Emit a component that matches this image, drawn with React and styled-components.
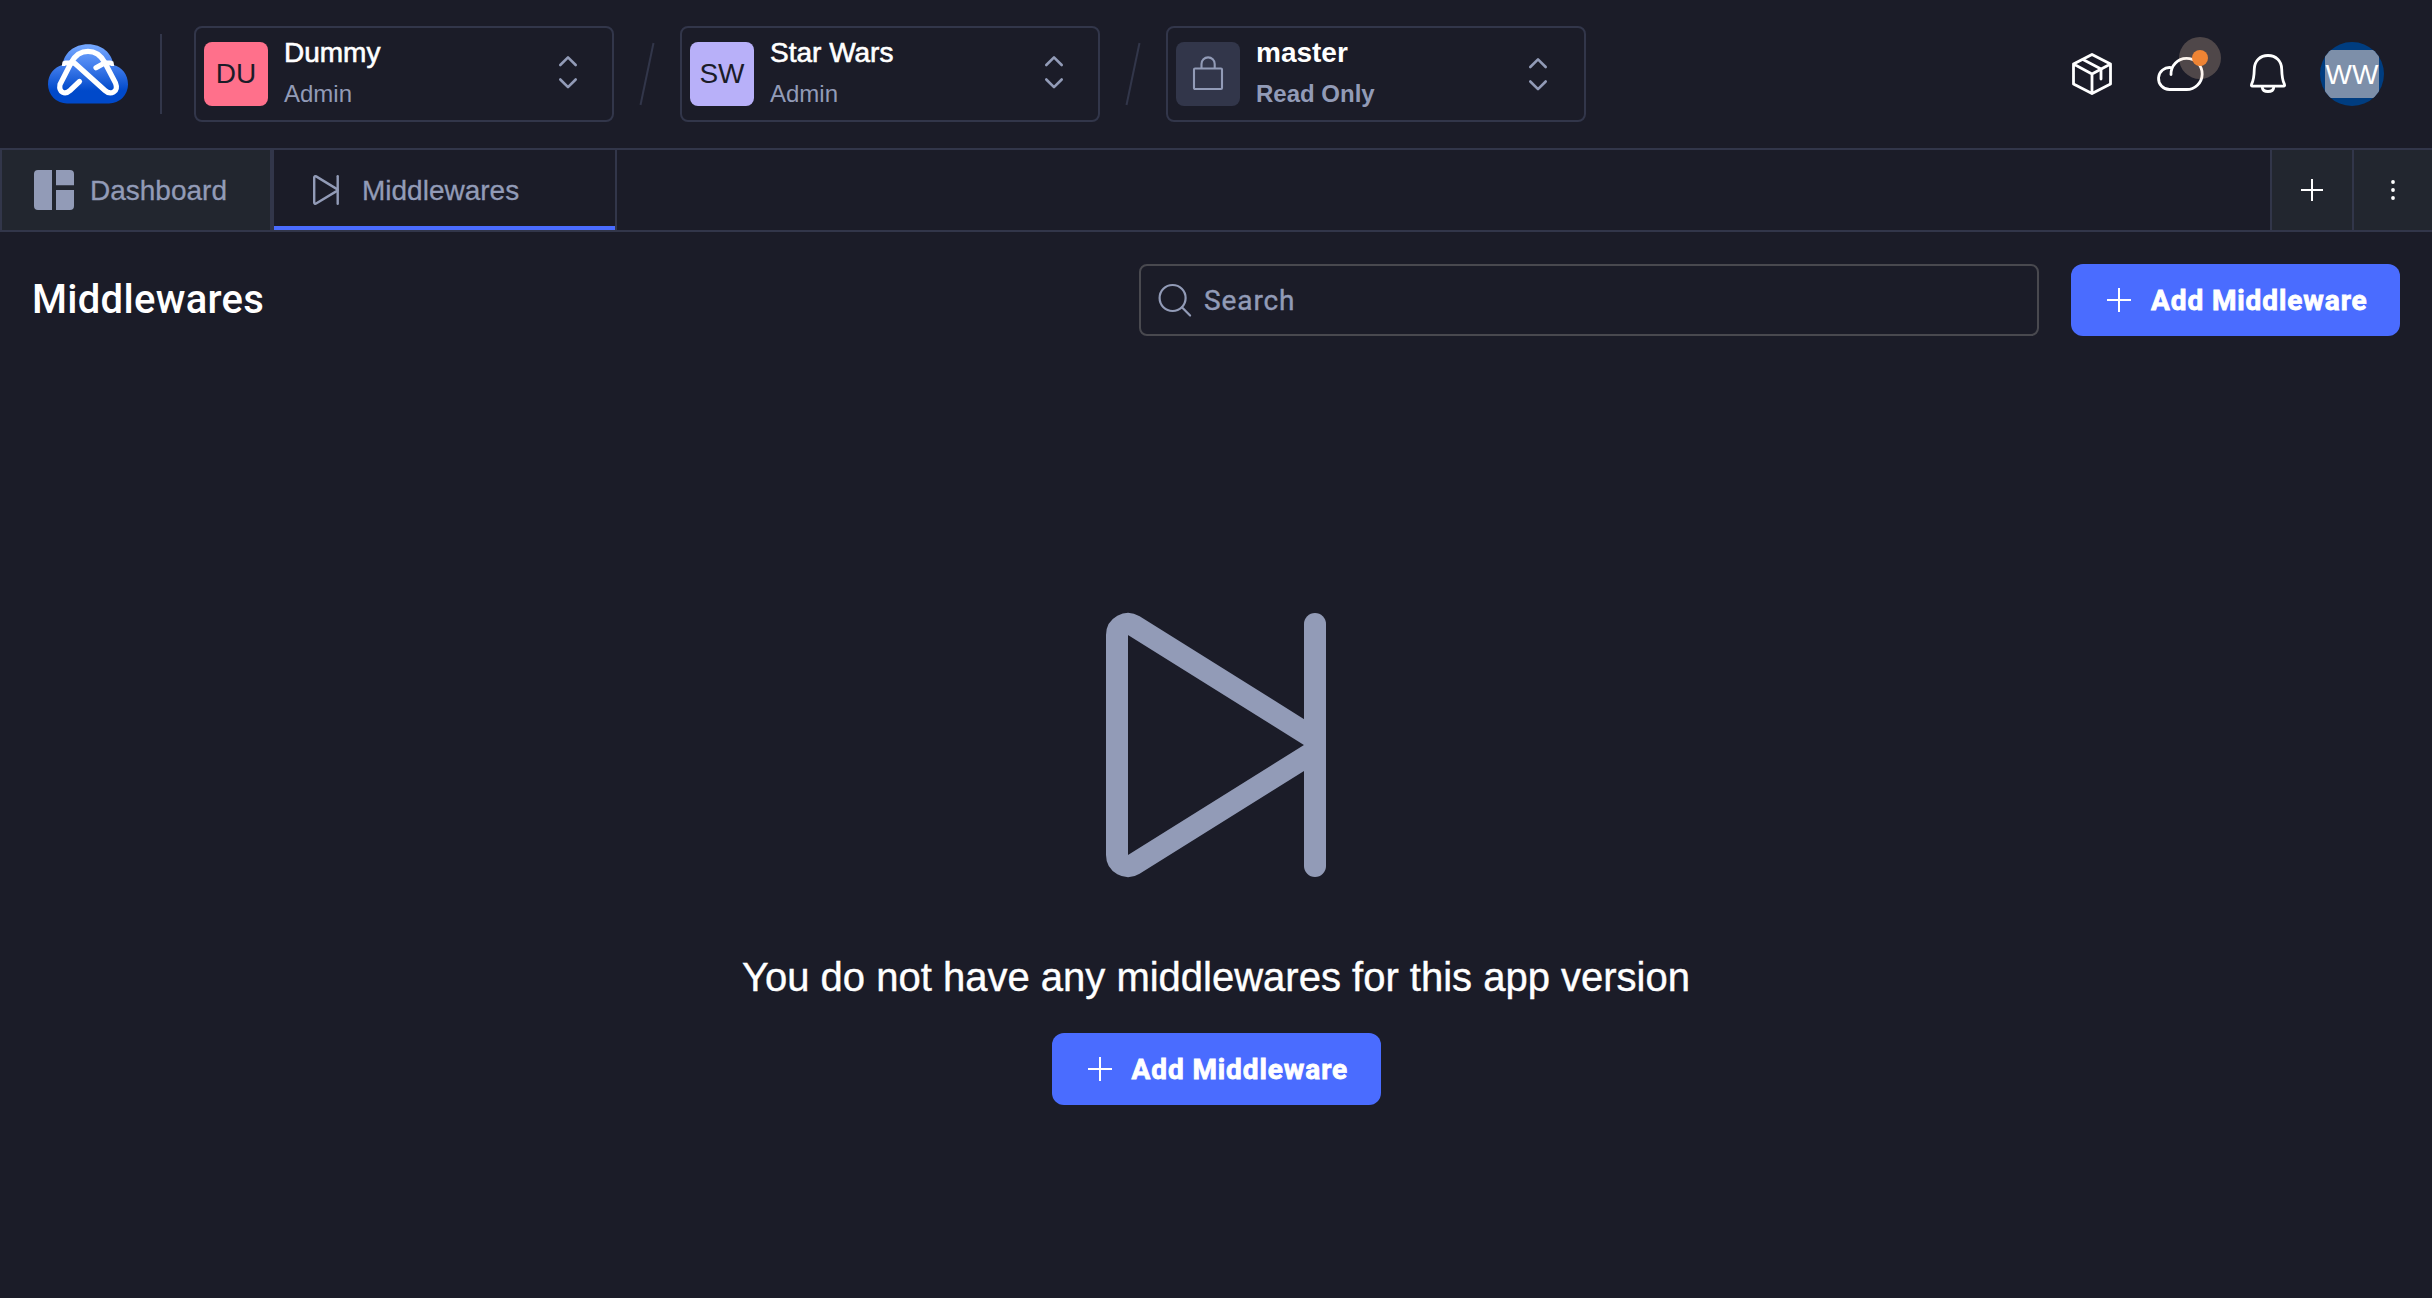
import React from "react";
import styled, { createGlobalStyle } from "styled-components";

const color = {
  bg: "#1b1c28",
  panel: "#22262f",
  line: "#32364a",
  muted: "#929bb7",
  blue: "#4a6cff",
  ink: "#1b1c28",
};

const sans = `"Liberation Sans", Arial, Helvetica, sans-serif`;
const display = `Roboto, "Liberation Sans", sans-serif`;

const GlobalStyle = createGlobalStyle`
  * { box-sizing: border-box; }
  html, body { margin: 0; height: 100%; background: ${color.bg}; }
  #root { height: 100%; }
  button { border: 0; background: none; padding: 0; margin: 0; font: inherit; color: inherit; }
  svg { display: block; flex: none; overflow: visible; }
`;

const Page = styled.div`
  display: flex;
  flex-direction: column;
  min-height: 100vh;
  background: ${color.bg};
  color: #fff;
  font-family: ${sans};
  font-size: 28px;
`;

const Header = styled.header`
  display: flex;
  align-items: center;
  height: 148px;
  padding: 0 48px;
`;

const HeaderDivider = styled.div`
  width: 2px;
  height: 80px;
  margin: 0 32px;
  background: ${color.line};
`;

const Selector = styled.button`
  display: flex;
  align-items: flex-start;
  width: 420px;
  height: 96px;
  padding: 0 35px 0 8px;
  border: 2px solid ${color.line};
  border-radius: 8px;
  text-align: left;
  font-weight: ${(p) => (p.$bold ? 700 : 400)};
`;

const Badge = styled.span`
  display: flex;
  align-items: center;
  justify-content: center;
  width: 64px;
  height: 64px;
  margin-top: 14px;
  border-radius: 8px;
  background: ${(p) => p.$bg};
  color: ${color.ink};
  font-size: 28px;
`;

const SelectorText = styled.span`
  display: flex;
  flex: 1;
  flex-direction: column;
  gap: 8px;
  padding: 8px 0 0 16px;
`;

const SelectorName = styled.span`
  font-size: 28px;
  line-height: 34px;
  -webkit-text-stroke: ${(p) => (p.$bold ? 0 : "0.6px #fff")};
`;

const SelectorRole = styled.span`
  color: ${color.muted};
  font-size: 24px;
  line-height: 32px;
`;

const Chevrons = styled.span`
  margin-top: ${(p) => (p.$low ? 30 : 28)}px;
  margin-right: ${(p) => (p.$low ? 2 : 0)}px;
`;

const SlashBox = styled.span`
  margin: 0 26px;
`;

const HeaderActions = styled.div`
  display: flex;
  flex: 1;
  align-items: center;
  justify-content: flex-end;
`;

const IconButton = styled.button`
  position: relative;
  margin-right: ${(p) => p.$after}px;
  margin-bottom: ${(p) => p.$lift || 0}px;
`;

const Halo = styled.span`
  position: absolute;
  right: -18px;
  top: -20px;
  display: flex;
  align-items: center;
  justify-content: center;
  width: 42px;
  height: 42px;
  border-radius: 50%;
  background: rgba(255, 214, 186, 0.23);

  &::after {
    content: "";
    width: 16px;
    height: 16px;
    border-radius: 50%;
    background: #ee8434;
  }
`;

const UserAvatar = styled.button`
  display: flex;
  align-items: center;
  justify-content: center;
  width: 64px;
  height: 64px;
  border-radius: 50%;
  overflow: hidden;
  background: #003d80;
`;

const UserInitials = styled.span`
  width: 54px;
  height: 48px;
  background: #7d8fa9;
  color: #fff;
  font-size: 28px;
  line-height: 50px;
  text-align: center;
  white-space: nowrap;
`;

const TabBar = styled.nav`
  display: flex;
  height: 84px;
  border-top: 2px solid ${color.line};
  border-bottom: 2px solid ${color.line};
`;

const Tab = styled.button`
  display: flex;
  align-items: center;
  width: ${(p) => p.$width}px;
  padding: 0 0 0 ${(p) => p.$inset}px;
  gap: ${(p) => p.$gap}px;
  border-left: 2px solid ${color.line};
  border-right: 2px solid ${color.line};
  background: ${(p) => (p.$active ? color.bg : color.panel)};
  box-shadow: ${(p) => (p.$active ? `inset 0 -4px 0 ${color.blue}` : "none")};
  color: ${color.muted};
  font-size: 28px;
`;

const TabLabel = styled.span`
  padding-top: 1px;
  -webkit-text-stroke: 0.3px ${color.muted};
`;

const TabTools = styled.div`
  display: flex;
  margin-left: auto;
`;

const TabTool = styled.button`
  display: flex;
  align-items: center;
  justify-content: center;
  width: ${(p) => p.$width}px;
  border-left: 2px solid ${color.line};
  background: ${color.panel};
`;

const Toolbar = styled.section`
  display: flex;
  align-items: center;
  padding: 32px 32px 0;
`;

const Title = styled.h1`
  flex: 1;
  margin: 0;
  font-family: ${display};
  font-size: 40px;
  font-weight: 500;
  line-height: 48px;
  letter-spacing: 0.3px;
`;

const SearchField = styled.label`
  display: flex;
  align-items: center;
  gap: 12px;
  width: 900px;
  height: 72px;
  margin-right: 32px;
  padding: 0 18px;
  border: 2px solid #49494f;
  border-radius: 8px;
  color: ${color.muted};
  font-family: ${display};
  font-size: 28px;
  letter-spacing: 0.9px;
  -webkit-text-stroke: 0.4px ${color.muted};
`;

const PrimaryButton = styled.button`
  display: flex;
  align-items: center;
  width: 329px;
  height: 72px;
  padding-left: 36px;
  gap: 20px;
  border-radius: 12px;
  background: ${color.blue};
  color: #fff;
  font-family: ${display};
  font-size: 28px;
  font-weight: 700;
  letter-spacing: 0.9px;
  white-space: nowrap;
  -webkit-text-stroke: 0.8px #fff;
`;

const EmptyState = styled.main`
  display: flex;
  flex-direction: column;
  align-items: center;
  padding-top: 277px;
`;

const EmptyMessage = styled.p`
  margin: 76px 0 32px;
  font-size: 40px;
  line-height: 48px;
  -webkit-text-stroke: 0.4px #fff;
`;

const Logo = () => (
  <svg width="80" height="60" viewBox="48 44 80 60" fill="none">
    <defs>
      <linearGradient id="sky" x1="88" y1="44" x2="88" y2="104" gradientUnits="userSpaceOnUse">
        <stop offset="0" stopColor="#76a9ff" />
        <stop offset="0.35" stopColor="#4580ee" />
        <stop offset="0.78" stopColor="#0049ca" />
        <stop offset="1" stopColor="#0049ca" />
      </linearGradient>
    </defs>
    <path
      d="M67 103.500a19 19 0 0 1-19-19c0-10 6-17.500 14.500-19.500C64 53 74 44.200 88 44.200s24 8.800 25.500 20.800C122 67 128 74.500 128 84.500a19 19 0 0 1-19 19Z"
      fill="url(#sky)"
    />
    <path d="M62.600 61.500h4L65 66h-3.200ZM113.400 61.500h-4l1.600 4.500h3.200Z" fill="#fff" />
    <g stroke="#fff" strokeWidth="5.200" strokeLinecap="round" strokeLinejoin="round">
      <path d="M79.500 81.500 70 90.500c-5 4.500-11.500 2-10-6L71.500 62C76 54 81 51.300 88 51.300S100 54 104.500 62L115.500 83c3.500 9-5 12.500-10.500 7.500L75 63.500" />
      <path d="M65.500 63H74M110.500 63h-6l-8.500 4.800" />
    </g>
  </svg>
);

const Slash = () => (
  <SlashBox>
    <svg width="14" height="64" viewBox="0 0 14 64">
      <path d="M13.500 1 .5 63" stroke={color.line} strokeWidth="2" />
    </svg>
  </SlashBox>
);

const UpDown = () => (
  <svg width="18" height="32" viewBox="0 0 18 32" fill="none" stroke={color.muted} strokeWidth="2.600" strokeLinecap="round" strokeLinejoin="round">
    <path d="M1.300 9 9 1.400 16.700 9M1.300 23.500 9 31.100 16.700 23.500" />
  </svg>
);

const Lock = () => (
  <svg width="30" height="34" viewBox="0 0 30 34" fill="none" stroke={color.muted} strokeWidth="2.100">
    <rect x="1" y="11.500" width="28" height="20.500" rx="1" />
    <path d="M8.500 11V7a6.600 6.600 0 0 1 13.200 0v4" />
  </svg>
);

const Box = () => (
  <svg width="40" height="42" viewBox="0 0 40 42" fill="none" stroke="#fff" strokeWidth="2.800" strokeLinecap="round" strokeLinejoin="round">
    <path d="M20 1.400 38.500 11v20L20 40.600 1.500 31V11ZM1.500 11 20 21l18.500-10M20 21v19.600" />
    <path d="M11 6.500 29 16v10" />
  </svg>
);

const Cloud = () => (
  <svg width="46" height="34" viewBox="0 0 46 34" fill="none" stroke="#fff" strokeWidth="2.800" strokeLinecap="round">
    <path d="M14 17.500A15.600 15.600 0 1 1 29 32.500H12.500a11 11 0 1 1 1.500-21.900" />
  </svg>
);

const Bell = () => (
  <svg width="36" height="39" viewBox="0 0 36 39" fill="none" stroke="#fff" strokeWidth="2.800" strokeLinecap="round" strokeLinejoin="round">
    <path d="M18 1.500c-8 0-13.500 5.500-13.700 13.500C4.100 23 3.800 26 1.600 30.200c-.5 1.200-.2 2 1 2h30.800c1.200 0 1.500-.8 1-2C32.200 26 31.900 23 31.700 15 31.500 7 26 1.500 18 1.500Z" />
    <path d="M12.300 33.500c.5 5.300 10.900 5.300 11.400 0" />
  </svg>
);

const DashboardIcon = () => (
  <svg width="40" height="40" viewBox="0 0 40 40" fill={color.muted}>
    <path d="M4 0h14v40H4a4 4 0 0 1-4-4V4a4 4 0 0 1 4-4ZM22 0h14a4 4 0 0 1 4 4v11.300H22ZM22 20h18v16a4 4 0 0 1-4 4H22Z" />
  </svg>
);

const SkipIcon = () => (
  <svg width="26" height="30" viewBox="0 0 26 30" fill="none" stroke={color.muted} strokeWidth="2.400" strokeLinecap="round">
    <path d="M1.200 2.500v25A1.250 1.250 0 0 0 3.100 28.600L24 15.900a1 1 0 0 0 0-1.800L3.100 1.400A1.250 1.250 0 0 0 1.200 2.500Z" />
    <path d="M24.700 1.200v27.600" />
  </svg>
);

const SkipLarge = () => (
  <svg width="220" height="264" viewBox="0 0 220 264" fill="none" stroke={color.muted} strokeWidth="22" strokeLinecap="round">
    <path d="M11 22V242A11 11 0 0 0 27.800 251.300L203.800 141.300A11 11 0 0 0 203.800 122.700L27.800 12.700A11 11 0 0 0 11 22Z" />
    <path d="M209 11V253" />
  </svg>
);

const Plus = ({ size }) => (
  <svg width={size} height={size} viewBox={`0 0 ${size} ${size}`} stroke="#fff" strokeWidth="2">
    <path d={`M0 ${size / 2}H${size}M${size / 2} 0V${size}`} />
  </svg>
);

const Kebab = () => (
  <svg width="4" height="20" viewBox="0 0 4 20" fill="#fff">
    <circle cx="2" cy="2" r="1.900" />
    <circle cx="2" cy="10" r="1.900" />
    <circle cx="2" cy="18" r="1.900" />
  </svg>
);

const Magnifier = () => (
  <svg width="33" height="33" viewBox="0 0 33 33" fill="none" stroke={color.muted} strokeWidth="2.200" strokeLinecap="round">
    <circle cx="13.600" cy="14" r="13" />
    <path d="m22.900 23.300 8.200 8.200" />
  </svg>
);

const ContextSelector = ({ badge, badgeColor, name, role, bold }) => (
  <Selector $bold={bold}>
    <Badge $bg={badgeColor}>{badge}</Badge>
    <SelectorText>
      <SelectorName $bold={bold}>{name}</SelectorName>
      <SelectorRole>{role}</SelectorRole>
    </SelectorText>
    <Chevrons $low={bold}>
      <UpDown />
    </Chevrons>
  </Selector>
);

const AddMiddleware = () => (
  <PrimaryButton>
    <Plus size={24} />
    Add Middleware
  </PrimaryButton>
);

export default function App() {
  return (
    <Page>
      <GlobalStyle />
      <Header>
        <Logo />
        <HeaderDivider />
        <ContextSelector badge="DU" badgeColor="#ff708b" name="Dummy" role="Admin" />
        <Slash />
        <ContextSelector badge="SW" badgeColor="#b8b0f9" name="Star Wars" role="Admin" />
        <Slash />
        <ContextSelector badge={<Lock />} badgeColor={color.line} name="master" role="Read Only" bold />
        <HeaderActions>
          <IconButton $after={45}>
            <Box />
          </IconButton>
          <IconButton $after={47}>
            <Cloud />
            <Halo />
          </IconButton>
          <IconButton $after={34} $lift={1}>
            <Bell />
          </IconButton>
          <UserAvatar>
            <UserInitials>WW</UserInitials>
          </UserAvatar>
        </HeaderActions>
      </Header>
      <TabBar>
        <Tab $width={272} $inset={32} $gap={16}>
          <DashboardIcon />
          <TabLabel>Dashboard</TabLabel>
        </Tab>
        <Tab $active $width={345} $inset={39} $gap={23}>
          <SkipIcon />
          <TabLabel>Middlewares</TabLabel>
        </Tab>
        <TabTools>
          <TabTool $width={82}>
            <Plus size={22} />
          </TabTool>
          <TabTool $width={80}>
            <Kebab />
          </TabTool>
        </TabTools>
      </TabBar>
      <Toolbar>
        <Title>Middlewares</Title>
        <SearchField>
          <Magnifier />
          Search
        </SearchField>
        <AddMiddleware />
      </Toolbar>
      <EmptyState>
        <SkipLarge />
        <EmptyMessage>You do not have any middlewares for this app version</EmptyMessage>
        <AddMiddleware />
      </EmptyState>
    </Page>
  );
}
